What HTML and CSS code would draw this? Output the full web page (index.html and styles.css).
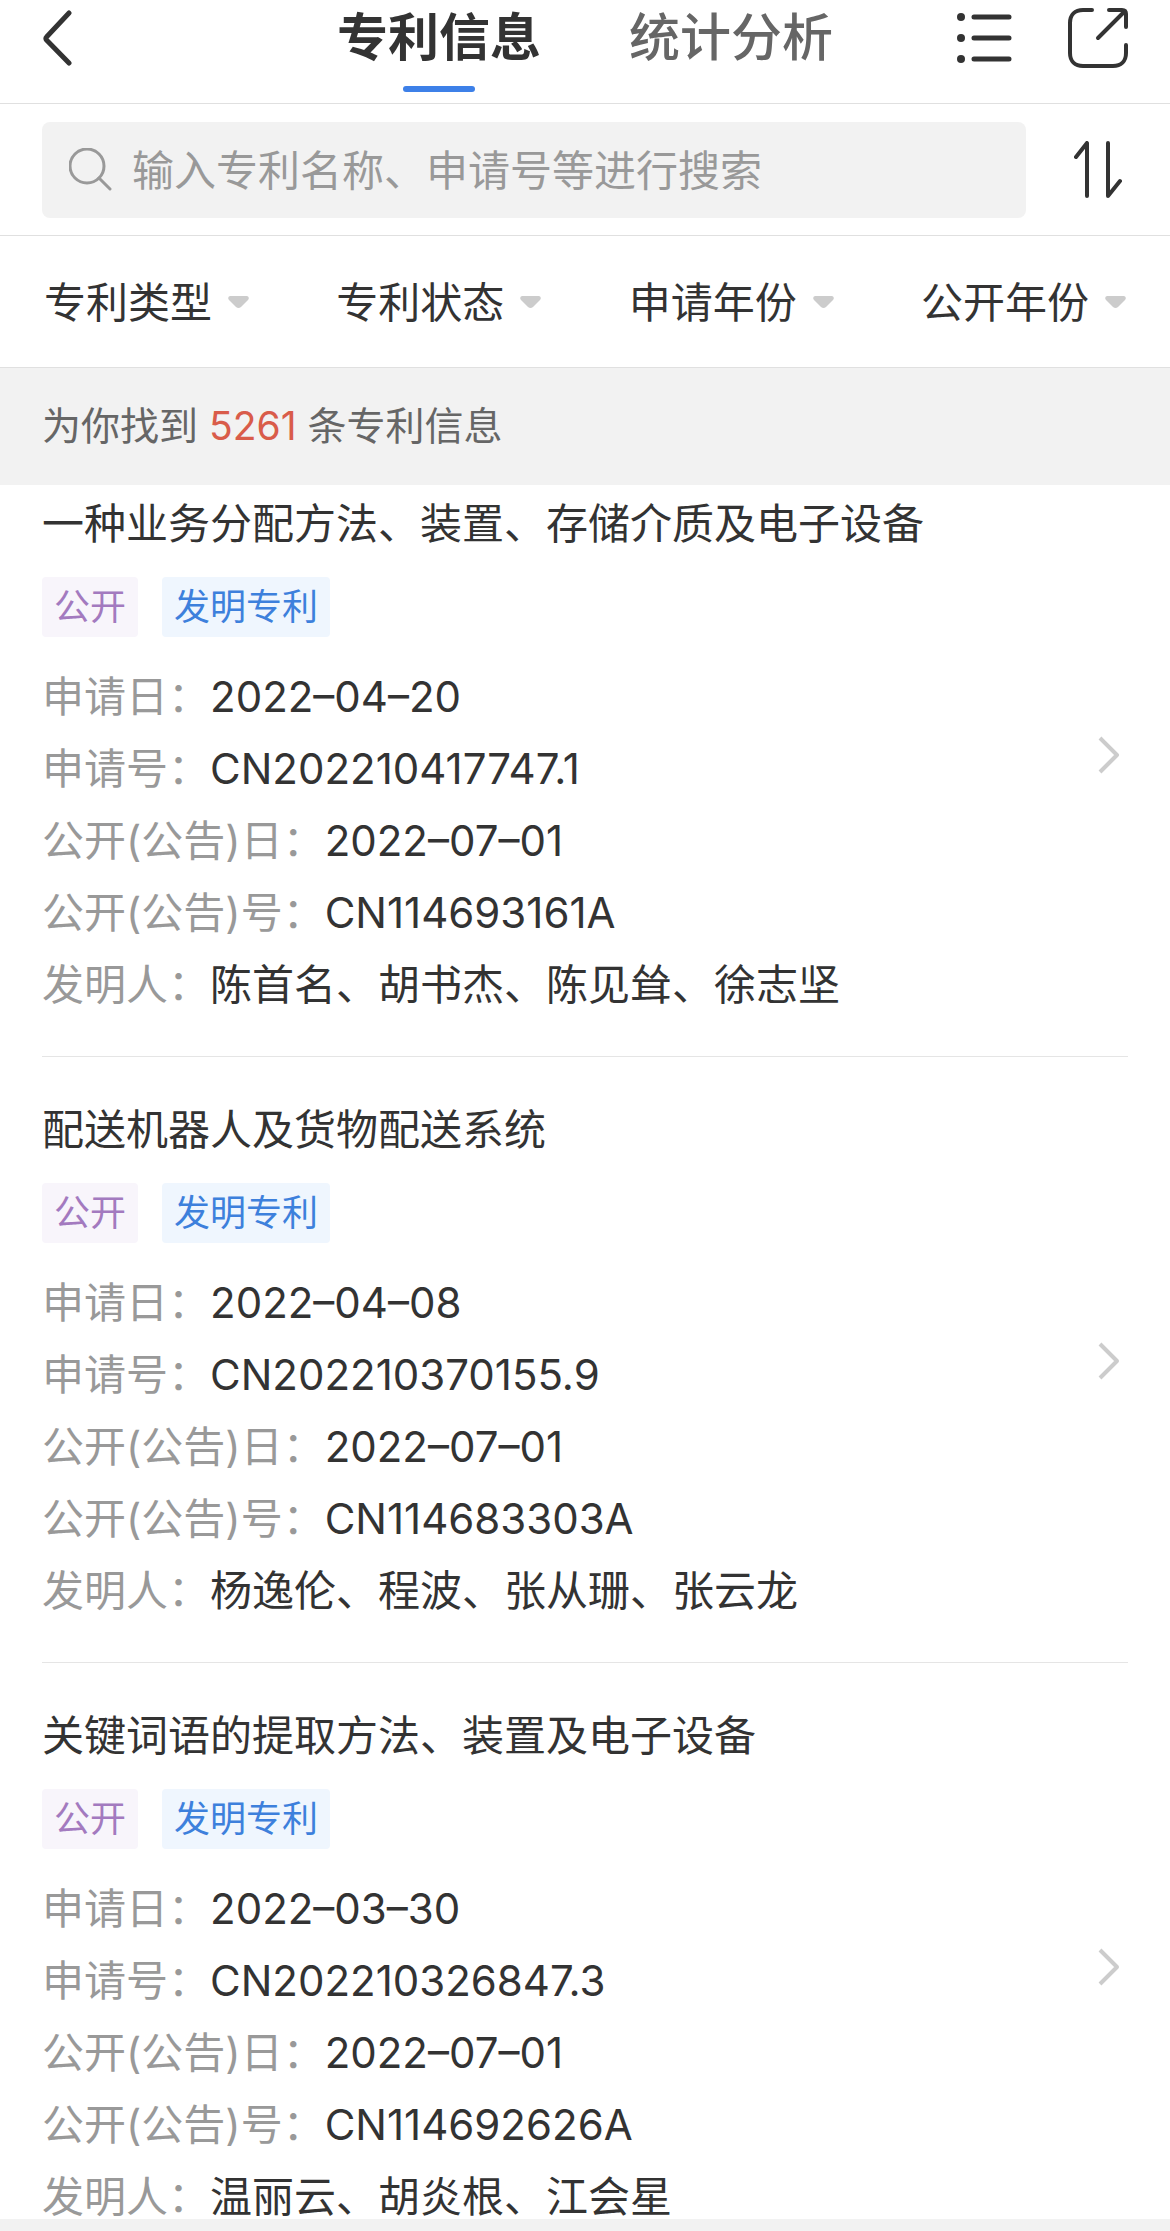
FILE: index.html
```html
<!DOCTYPE html>
<html lang="zh-CN">
<head>
	<meta charset="UTF-8">
	<meta name="viewport" content="width=device-width">
	<title>专利信息</title>
	<link rel="stylesheet" href="styles.css">
</head>
<body>
<header class="topbar">
	<button class="icon-btn" aria-label="返回">
		<svg class="ico-back" viewBox="0 0 30 58"><path d="M27 4 4.500 28a2 2 0 0 0 0 3L27 54"/></svg>
	</button>
	<nav class="tabs">
		<a href="#info" class="tab active">专利信息</a>
		<a href="#stats" class="tab">统计分析</a>
	</nav>
	<div class="actions">
		<button class="icon-btn" aria-label="列表">
			<svg class="ico-list" viewBox="0 0 56 50"><path d="M18 4h35M18 25h35M18 46h35"/><g class="dots"><circle cx="5" cy="4" r="4"/><circle cx="5" cy="25" r="4"/><circle cx="5" cy="46" r="4"/></g></svg>
		</button>
		<button class="icon-btn" aria-label="分享">
			<svg class="ico-share" viewBox="0 0 60 60"><path d="M24 2H15C7 2 2 7 2 15v30c0 8 5 13 13 13h30c8 0 13-5 13-13V37M41 2h13c3 0 4 1 4 4v13M56 4 30 30"/></svg>
		</button>
	</div>
</header>
<div class="searchbar">
	<label class="search">
		<svg class="ico-search" viewBox="0 0 43 43"><circle cx="18" cy="18" r="17"/><path d="M30 30l11 11"/></svg>
		<input type="search" aria-label="搜索" placeholder="输入专利名称、申请号等进行搜索">
	</label>
	<button class="icon-btn" aria-label="排序">
		<svg class="ico-sort" viewBox="0 0 50 58"><path d="M2 16 13 2v53M34 2v53l12-15"/></svg>
	</button>
</div>
<div class="filters">
	<label class="filter">
		<select aria-label="专利类型"><option>专利类型</option></select>
		<svg class="ico-caret" viewBox="0 0 21 13"><path d="M2 0h17q3 1 1 4l-7 7q-2.500 2-5 0L1 4Q-1 1 2 0z"/></svg>
	</label>
	<label class="filter">
		<select aria-label="专利状态"><option>专利状态</option></select>
		<svg class="ico-caret" viewBox="0 0 21 13"><path d="M2 0h17q3 1 1 4l-7 7q-2.500 2-5 0L1 4Q-1 1 2 0z"/></svg>
	</label>
	<label class="filter">
		<select aria-label="申请年份"><option>申请年份</option></select>
		<svg class="ico-caret" viewBox="0 0 21 13"><path d="M2 0h17q3 1 1 4l-7 7q-2.500 2-5 0L1 4Q-1 1 2 0z"/></svg>
	</label>
	<label class="filter">
		<select aria-label="公开年份"><option>公开年份</option></select>
		<svg class="ico-caret" viewBox="0 0 21 13"><path d="M2 0h17q3 1 1 4l-7 7q-2.500 2-5 0L1 4Q-1 1 2 0z"/></svg>
	</label>
</div>
<p class="summary">为你找到 <b>5261</b> 条专利信息</p>
<main class="list">
	<a href="#p1" class="card">
		<div class="card-body">
			<h2>一种业务分配方法、装置、存储介质及电子设备</h2>
			<div class="tags"><span class="tag open">公开</span><span class="tag kind">发明专利</span></div>
			<dl>
				<div><dt>申请日：</dt><dd>2022–04–20</dd></div>
				<div><dt>申请号：</dt><dd>CN202210417747.1</dd></div>
				<div><dt>公开(公告)日：</dt><dd>2022–07–01</dd></div>
				<div><dt>公开(公告)号：</dt><dd>CN114693161A</dd></div>
				<div><dt>发明人：</dt><dd>陈首名、胡书杰、陈见耸、徐志坚</dd></div>
			</dl>
		</div>
		<svg class="ico-more" viewBox="0 0 22 44"><path d="M2 2l17 17L2 36"/></svg>
	</a>
	<a href="#p2" class="card">
		<div class="card-body">
			<h2>配送机器人及货物配送系统</h2>
			<div class="tags"><span class="tag open">公开</span><span class="tag kind">发明专利</span></div>
			<dl>
				<div><dt>申请日：</dt><dd>2022–04–08</dd></div>
				<div><dt>申请号：</dt><dd>CN202210370155.9</dd></div>
				<div><dt>公开(公告)日：</dt><dd>2022–07–01</dd></div>
				<div><dt>公开(公告)号：</dt><dd>CN114683303A</dd></div>
				<div><dt>发明人：</dt><dd>杨逸伦、程波、张从珊、张云龙</dd></div>
			</dl>
		</div>
		<svg class="ico-more" viewBox="0 0 22 44"><path d="M2 2l17 17L2 36"/></svg>
	</a>
	<a href="#p3" class="card">
		<div class="card-body">
			<h2>关键词语的提取方法、装置及电子设备</h2>
			<div class="tags"><span class="tag open">公开</span><span class="tag kind">发明专利</span></div>
			<dl>
				<div><dt>申请日：</dt><dd>2022–03–30</dd></div>
				<div><dt>申请号：</dt><dd>CN202210326847.3</dd></div>
				<div><dt>公开(公告)日：</dt><dd>2022–07–01</dd></div>
				<div><dt>公开(公告)号：</dt><dd>CN114692626A</dd></div>
				<div><dt>发明人：</dt><dd>温丽云、胡炎根、江会星</dd></div>
			</dl>
		</div>
		<svg class="ico-more" viewBox="0 0 22 44"><path d="M2 2l17 17L2 36"/></svg>
	</a>
</main>
</body>
</html>
```
FILE: styles.css
```css
*{box-sizing:border-box;margin:0;padding:0;}
body{
	display:flex;
	flex-direction:column;
	height:100vh;
	padding-bottom:12px;
	overflow:hidden;
	background:#f2f2f2;
	color:#333;
	font-family:Inter,"Noto Sans CJK SC",sans-serif;
	font-size:42px;
	line-height:60px;
}
a{color:inherit;text-decoration:none;}
button,input,select{font:inherit;color:inherit;background:none;border:none;outline:none;}
svg{display:block;flex:none;fill:none;stroke:#333;stroke-width:5;stroke-linecap:round;stroke-linejoin:round;}
.icon-btn{flex:none;cursor:pointer;}

/* top bar */
.topbar{
	display:grid;
	grid-template-columns:1fr auto 1fr;
	flex:none;
	height:104px;
	padding:0 42px;
	background:#fff;
	border-bottom:1px solid #e0e0e0;
}
.topbar .icon-btn{height:76px;}
.topbar > .icon-btn{justify-self:start;}
.tabs{display:flex;gap:88px;}
.tab{
	display:flex;
	flex-direction:column;
	align-items:center;
	font-size:51px;
	font-weight:500;
	line-height:76px;
	color:#666;
}
.tab.active{font-weight:700;color:#333;}
.tab.active::after{content:"";width:72px;height:6px;margin-top:10px;border-radius:3px;background:#3d80e8;}
.actions{display:flex;justify-content:flex-end;gap:56px;}
.ico-back{width:30px;height:58px;}
.ico-list{width:56px;height:50px;}
.ico-share{width:60px;height:60px;stroke-width:4;}
.dots{fill:#333;stroke:none;}

/* search */
.searchbar{
	display:flex;
	flex:none;
	align-items:center;
	gap:48px;
	height:132px;
	padding:0 46px 0 42px;
	background:#fff;
	border-bottom:1px solid #e0e0e0;
}
.search{
	display:flex;
	flex:1;
	align-items:center;
	gap:20px;
	height:96px;
	padding:0 27px;
	border-radius:8px;
	background:#f2f2f2;
}
.search input{flex:1;min-width:0;padding-top:2px;}
.search input::placeholder{color:#999;opacity:1;}
.ico-search{width:43px;height:43px;stroke:#999;stroke-width:3;}
.ico-sort{width:50px;height:58px;stroke-width:4;}

/* filters */
.filters{
	display:flex;
	flex:none;
	align-items:center;
	justify-content:space-between;
	height:132px;
	padding:2px 44px 0;
	background:#fff;
	border-bottom:1px solid #e0e0e0;
}
.filter{display:flex;align-items:center;gap:15px;}
.filter select{appearance:none;line-height:60px;}
.ico-caret{width:21px;height:13px;fill:#ccc;stroke:none;}

.summary{flex:none;padding:28px 42px 29px;font-size:39px;color:#666;}
.summary b{font-weight:400;color:#d95c4a;}

/* patents, the list is scrolled slightly under the summary */
.list{flex:1;min-height:0;overflow-y:auto;scrollbar-width:none;background:#fff;}
.card{
	display:flex;
	align-items:center;
	margin:0 42px;
	padding:43px 8px 35px 0;
	border-bottom:1px solid #e5e5e5;
}
.card:first-child{margin-top:-34px;}
.card-body{flex:1;min-width:0;}
.card h2{font-size:42px;font-weight:400;}
.tags{display:flex;gap:24px;margin:23px 0 24px;}
.tag{padding:0 12px;border-radius:4px;font-size:36px;}
.tag.open{color:#a37abf;background:#f8f5fb;}
.tag.kind{color:#3d80dc;background:#eff6fe;}
.card dl > div{display:flex;line-height:72px;}
.card dt{color:#999;}
.ico-more{width:22px;height:44px;stroke:#ccc;stroke-width:4;stroke-linecap:butt;}
```
